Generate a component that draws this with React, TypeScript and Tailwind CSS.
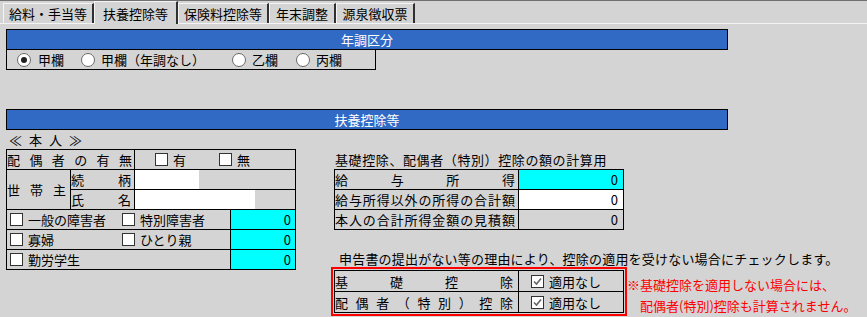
import React from "react";

const Spread = ({ text, className = "" }: { text: string; className?: string }) => (
  <div className={`flex justify-between ${className}`}>
    {[...text].map((c, i) => (
      <span key={i}>{c}</span>
    ))}
  </div>
);

const Box = ({ checked = false }: { checked?: boolean }) => (
  <span className="inline-flex h-[13px] w-[13px] shrink-0 items-center justify-center border border-[#333] bg-white">
    {checked && (
      <svg width="11" height="11" viewBox="0 0 11 11">
        <path d="M2 5.5 L4.5 8 L9 2.5" fill="none" stroke="#666" strokeWidth="1.6" />
      </svg>
    )}
  </span>
);

const Radio = ({ on = false }: { on?: boolean }) => (
  <span className="inline-flex h-[14px] w-[14px] shrink-0 items-center justify-center rounded-full border border-[#6a6a6a] bg-white">
    {on && <span className="h-[6px] w-[6px] rounded-full bg-[#222]" />}
  </span>
);

const Tab = ({ label, w, active = false }: { label: string; w: string; active?: boolean }) => (
  <div
    className={`flex items-center justify-center border-l border-t border-l-[#f4f4f4] border-t-[#f4f4f4] border-r-2 border-r-[#303030] ${w} ${
      active ? "relative -mb-px h-[23px] bg-[#d4d4d4]" : "h-[20px]"
    }`}
  >
    {label}
  </div>
);

const ChkLabel = ({ label, checked, className = "" }: { label: string; checked?: boolean; className?: string }) => (
  <div className={`flex items-center gap-[5px] ${className}`}>
    <Box checked={checked} />
    <span>{label}</span>
  </div>
);

export default function App() {
  return (
    <div className="h-[317px] w-[867px] overflow-hidden border-t border-[#707070] bg-[#d4d4d4] font-['Noto_Sans_CJK_JP',sans-serif] text-[13px] leading-none text-black">
      {/* tabs */}
      <div className="flex h-[23px] items-end border-b border-[#f4f4f4] pl-[3px]">
        <Tab label="給料・手当等" w="w-[91px]" />
        <Tab label="扶養控除等" w="w-[84px]" active />
        <Tab label="保険料控除等" w="w-[91px]" />
        <Tab label="年末調整" w="w-[67px]" />
        <Tab label="源泉徴収票" w="w-[79px]" />
      </div>

      <div className="pl-[6px] pt-[5px]">
        {/* 年調区分 */}
        <div className="flex h-[21px] w-[722px] items-center justify-center border border-black bg-[#316ac5] text-white">
          年調区分
        </div>
        <div className="flex h-[20px] w-[370px] items-center border-x border-b border-black pl-[10px]">
          <div className="flex w-[64px] items-center gap-[7px]">
            <Radio on />
            <span>甲欄</span>
          </div>
          <div className="flex w-[151px] items-center gap-[6px]">
            <Radio />
            <span>甲欄（年調なし）</span>
          </div>
          <div className="flex w-[64px] items-center gap-[6px]">
            <Radio />
            <span>乙欄</span>
          </div>
          <div className="flex items-center gap-[6px]">
            <Radio />
            <span>丙欄</span>
          </div>
        </div>

        {/* 扶養控除等 */}
        <div className="mt-[39px] flex h-[21px] w-[722px] items-center justify-center border border-black bg-[#316ac5] text-white">
          扶養控除等
        </div>
        <div className="flex h-[19px] items-center pl-[3px] tracking-[7px]">≪本人≫</div>

        <div className="flex items-start">
          {/* left table */}
          <div className="w-[290px] border border-black">
            <div className="flex h-[20px] border-b border-black">
              <Spread text="配偶者の有無" className="h-full w-[128px] items-center border-r border-black pr-[2px]" />
              <div className="flex items-center pl-[20px]">
                <ChkLabel label="有" className="w-[64px] gap-[4px]" />
                <ChkLabel label="無" className="gap-[4px]" />
              </div>
            </div>
            <div className="flex h-[40px] border-b border-black">
              <Spread text="世帯主" className="h-full w-[64px] items-center border-r border-black pr-[4px]" />
              <div className="flex flex-1 flex-col">
                <div className="flex h-[20px] border-b border-black">
                  <Spread text="続柄" className="h-full w-[64px] items-center border-r border-black pr-[3px]" />
                  <div className="h-full w-[64px] bg-white" />
                </div>
                <div className="flex h-[19px]">
                  <Spread text="氏名" className="h-full w-[64px] items-center border-r border-black pr-[3px]" />
                  <div className="h-full w-[120px] bg-white" />
                </div>
              </div>
            </div>
            {[
              ["一般の障害者", "特別障害者"],
              ["寡婦", "ひとり親"],
              ["勤労学生", ""],
            ].map(([a, b], i) => (
              <div key={i} className={`flex ${i < 2 ? "h-[20px] border-b border-black" : "h-[19px]"}`}>
                <div className="flex h-full w-[224px] items-center border-r border-black pl-[3px]">
                  <ChkLabel label={a} className="w-[112px]" />
                  {b && <ChkLabel label={b} />}
                </div>
                <div className="flex h-full flex-1 items-center justify-end bg-[#00ffff] pr-[4px]">0</div>
              </div>
            ))}
          </div>

          {/* right column */}
          <div className="ml-[38px]">
            <div className="flex h-[20px] items-center pl-[1px] tracking-[0.6px]">
              基礎控除、配偶者（特別）控除の額の計算用
            </div>
            <div className="w-[290px] border border-black">
              {[
                ["給与所得", "bg-[#00ffff]"],
                ["給与所得以外の所得の合計額", "bg-white"],
                ["本人の合計所得金額の見積額", ""],
              ].map(([label, bg], i) => (
                <div key={i} className={`flex ${i < 2 ? "h-[20px] border-b border-black" : "h-[19px]"}`}>
                  <Spread text={label} className="h-full w-[184px] items-center border-r border-black pr-[3px]" />
                  <div className={`flex h-full flex-1 items-center justify-end pr-[5px] ${bg}`}>0</div>
                </div>
              ))}
            </div>

            <div className="mt-[20px] flex h-[16px] items-center pl-[5px] tracking-[0.2px]">
              申告書の提出がない等の理由により、控除の適用を受けない場合にチェックします。
            </div>

            <div className="-ml-[3px] mt-[1px] flex items-start">
              <div className="border-2 border-[#ff0000] p-[1px]">
                <div className="w-[290px] border border-black">
                  {["基礎控除", "配偶者（特別）控除"].map((label, i) => (
                    <div key={i} className={`flex ${i < 1 ? "h-[21px] border-b border-black" : "h-[20px]"}`}>
                      <Spread text={label} className="h-full w-[184px] items-center border-r border-black pr-[5px]" />
                      <div className="flex h-full items-center pl-[12px]">
                        <ChkLabel label="適用なし" checked />
                      </div>
                    </div>
                  ))}
                </div>
              </div>
              <div className="pt-[7px] text-[#ff0000]">
                <div className="flex h-[21px] items-center">※基礎控除を適用しない場合には、</div>
                <div className="flex h-[21px] items-center pl-[13px]">配偶者(特別)控除も計算されません。</div>
              </div>
            </div>
          </div>
        </div>
      </div>
    </div>
  );
}
